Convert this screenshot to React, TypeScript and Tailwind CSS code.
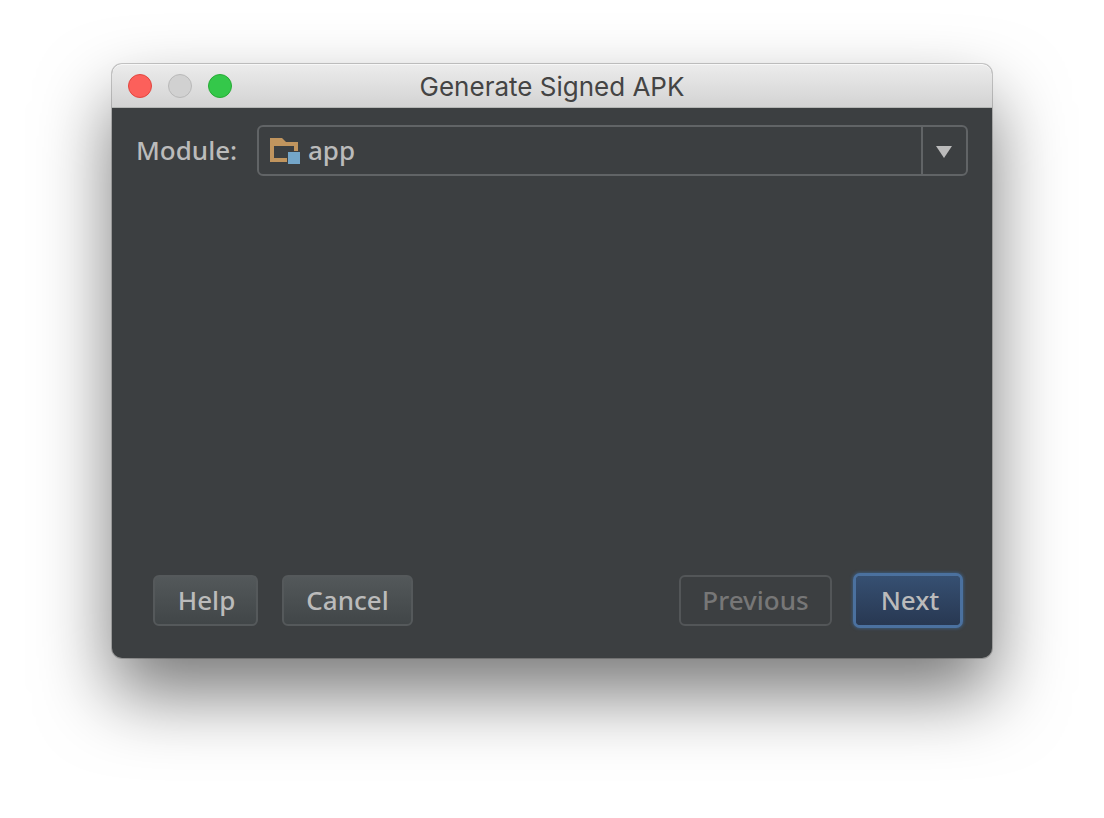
import { useState } from "react";
import type { ReactNode } from "react";

const ModuleIcon = () => (
  <svg width="30" height="26" viewBox="0 0 30 26" aria-hidden="true">
    <path
      d="M0 0h12l4 4h12v9h-4V8H4v12h13v4H0z"
      fill="#c1955e"
    />
    <path d="M18 14h12v12H18z" fill="#74a6c9" />
  </svg>
);

const ArrowIcon = () => (
  <svg width="16" height="12" viewBox="0 0 16 12" aria-hidden="true">
    <path d="M0 0h16L8 12z" fill="#bbbbbb" />
  </svg>
);

const TitleBar = ({ children }: { children: ReactNode }) => (
  <header className="relative flex h-11 items-center justify-center rounded-t-[10px] border-b border-[#b4b6b4] bg-linear-to-b from-[#ececec] to-[#d3d3d3] inset-shadow-[0_1px_0_#f7f7f7]">
    <div className="absolute left-4 flex gap-4">
      <button
        type="button"
        aria-label="Close"
        className="size-6 rounded-full border border-[#e2463f] bg-[#fc605b]"
      />
      <button
        type="button"
        aria-label="Minimize"
        disabled
        className="size-6 rounded-full border border-[#b9b9b9] bg-[#d1d1d1]"
      />
      <button
        type="button"
        aria-label="Zoom"
        className="size-6 rounded-full border border-[#27ab35] bg-[#34c84a]"
      />
    </div>
    <h1 className="pt-0.5 font-['Inter',sans-serif] text-[26px] leading-8 font-normal text-[#444444]">
      {children}
    </h1>
  </header>
);

const App = () => {
  const [module, setModule] = useState("app");

  return (
    <div className="flex min-h-screen bg-white px-28 pt-16 pb-40 font-['Noto_Sans',sans-serif] text-[26px] leading-8 font-medium text-[#bbbbbb]">
      <main className="flex flex-1 flex-col rounded-[10px] bg-[#3c3f41] shadow-[0_0_0_1px_rgba(0,0,0,0.2),0_36px_72px_rgba(0,0,0,0.53)]">
        <TitleBar>Generate Signed APK</TitleBar>
        <form
          className="flex flex-1 flex-col justify-between"
          onSubmit={(e) => e.preventDefault()}
        >
          <div className="flex items-center gap-5 px-6 pt-[17px]">
            <label htmlFor="module" className="w-[101px] pb-0.5">
              Module:
            </label>
            <div className="relative flex-1">
              <select
                id="module"
                value={module}
                onChange={(e) => setModule(e.target.value)}
                className="block h-[51px] w-full appearance-none rounded-md border-2 border-[#616466] bg-transparent pr-12 pb-0.5 pl-[49px] outline-none"
              >
                <option value="app">app</option>
              </select>
              <span className="pointer-events-none absolute inset-y-0 left-[13px] flex items-center">
                <ModuleIcon />
              </span>
              <span className="pointer-events-none absolute inset-y-0 right-0 flex w-[47px] items-center justify-center border-l-2 border-[#616466] pt-0.5 pr-1">
                <ArrowIcon />
              </span>
            </div>
          </div>
          <div className="flex items-center justify-between pr-8 pb-8 pl-[41px]">
            <div className="flex gap-6">
              <button
                type="button"
                className="h-[51px] w-[105px] rounded-md border-2 border-[#55595b] bg-linear-to-b from-[#53585a] to-[#414648] pb-0.5 pl-0.5"
              >
                Help
              </button>
              <button
                type="button"
                className="h-[51px] w-[131px] rounded-md border-2 border-[#55595b] bg-linear-to-b from-[#53585a] to-[#414648] pb-0.5"
              >
                Cancel
              </button>
            </div>
            <div className="flex items-center gap-6">
              <button
                type="button"
                disabled
                className="h-[51px] w-[153px] rounded-md border-2 border-[#535658] pb-0.5 text-[#777777]"
              >
                Previous
              </button>
              <button
                type="submit"
                className="h-[49px] w-[104px] rounded-sm bg-linear-to-b from-[#365072] to-[#283852] pb-0.5 pl-1 ring-3 ring-[#4b719f] shadow-[0_0_3px_4px_rgba(61,104,150,0.6)]"
              >
                Next
              </button>
            </div>
          </div>
        </form>
      </main>
    </div>
  );
};

export default App;
